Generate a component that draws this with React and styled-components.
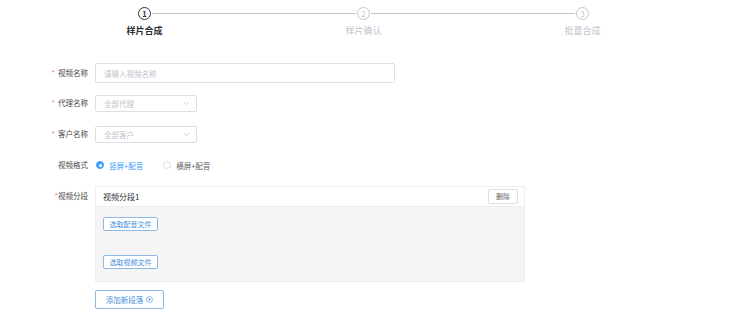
import React, { useState } from 'react';
import styled, { createGlobalStyle } from 'styled-components';

const GlobalStyle = createGlobalStyle`
  body {
    margin: 0;
    background: #ffffff;
    font-family: "Noto Sans CJK SC", "Noto Sans", sans-serif;
  }
`;

const Page = styled.div`
  width: 750px;
  height: 317px;
  overflow: hidden;
`;

const Steps = styled.div`
  display: grid;
  grid-template-columns: 13px 1fr 13px 1fr 13px;
  grid-template-rows: 13px 17px;
  row-gap: 2px;
  width: 451px;
  margin-left: 138px;
  padding-top: 7px;
`;

const StepCircle = styled.div`
  width: 13px;
  height: 13px;
  box-sizing: border-box;
  border-radius: 50%;
  border: ${p => (p.$active ? '1.5px solid #303133' : '1px solid #c0c4cc')};
  color: ${p => (p.$active ? '#303133' : '#c0c4cc')};
  font-size: 7.5px;
  font-weight: ${p => (p.$active ? 700 : 400)};
  display: flex;
  align-items: center;
  justify-content: center;
  line-height: 1;
`;

const StepLine = styled.div`
  align-self: center;
  height: 1px;
  background: #c0c4cc;
  margin: 0 1px;
`;

const StepTitle = styled.div`
  grid-row: 2;
  grid-column: ${p => p.$col};
  justify-self: center;
  white-space: nowrap;
  font-size: 9px;
  line-height: 17px;
  font-weight: ${p => (p.$active ? 700 : 400)};
  color: ${p => (p.$active ? '#303133' : '#c0c4cc')};
`;

const Form = styled.div`
  margin-top: 24px;
`;

const FormItem = styled.div`
  display: flex;
  align-items: ${p => (p.$top ? 'flex-start' : 'center')};
  min-height: 20px;
  margin-bottom: ${p => p.$gap ?? 11}px;
`;

const Label = styled.div`
  width: 88px;
  padding-right: 7px;
  box-sizing: content-box;
  text-align: right;
  font-size: 7.5px;
  line-height: 20px;
  color: #48494d;
  flex-shrink: 0;
`;

const Star = styled.span`
  color: #f56c6c;
  margin-right: ${p => (p.$tight ? '0' : '3px')};
`;

const Input = styled.input`
  width: 300px;
  height: 20px;
  box-sizing: border-box;
  border: 1px solid #dcdfe6;
  border-radius: 2px;
  padding: 0 8px;
  font-family: inherit;
  font-size: 7.5px;
  color: #606266;
  outline: none;
  &::placeholder {
    color: #c0c4cc;
  }
`;

const Select = styled.div`
  width: 102px;
  height: 17px;
  box-sizing: border-box;
  border: 1px solid #dcdfe6;
  border-radius: 2px;
  padding: 0 6px 0 8px;
  display: flex;
  align-items: center;
  justify-content: space-between;
  font-size: 7.5px;
  color: #c0c4cc;
`;

const RadioGroup = styled.div`
  display: flex;
  align-items: center;
  gap: 20px;
  margin-left: 1px;
`;

const Radio = styled.label`
  display: flex;
  align-items: center;
  gap: 5px;
  font-size: 7.5px;
  color: ${p => (p.$checked ? '#409eff' : '#606266')};
  cursor: pointer;
`;

const RadioDot = styled.span`
  width: 8px;
  height: 8px;
  box-sizing: border-box;
  border-radius: 50%;
  border: 1px solid ${p => (p.$checked ? '#409eff' : '#dcdfe6')};
  background: ${p => (p.$checked ? '#409eff' : '#fff')};
  display: flex;
  align-items: center;
  justify-content: center;
  &::after {
    content: '';
    width: 3px;
    height: 3px;
    border-radius: 50%;
    background: #fff;
  }
`;

const Content = styled.div`
  display: flex;
  flex-direction: column;
  align-items: flex-start;
`;

const Segment = styled.div`
  width: 430px;
  border: 1px solid #ebeef5;
  box-sizing: border-box;
`;

const SegmentHead = styled.div`
  height: 20px;
  box-sizing: border-box;
  border-bottom: 1px solid #ebeef5;
  background: #fff;
  display: flex;
  align-items: center;
  justify-content: space-between;
  padding: 0 6px 0 7px;
  font-size: 8px;
  color: #303133;
`;

const SegmentBody = styled.div`
  background: #f5f5f5;
  height: 74px;
  box-sizing: border-box;
  padding: 10px 7px 0;
  display: flex;
  flex-direction: column;
  align-items: flex-start;
  gap: 24px;
`;

const PlainButton = styled.button`
  height: 15px;
  padding: 0 7px;
  border: 1px solid #dcdfe6;
  border-radius: 2px;
  background: #fff;
  color: #606266;
  font-family: inherit;
  font-size: 7px;
  line-height: 1;
  cursor: pointer;
`;

const PickButton = styled.button`
  width: 55px;
  height: 14px;
  padding: 0;
  border: 1px solid #8fb8e6;
  border-radius: 2px;
  background: #fff;
  color: #4a8fd9;
  font-family: inherit;
  font-size: 7px;
  line-height: 1;
  cursor: pointer;
`;

const AddButton = styled.button`
  margin-top: 8px;
  width: 69px;
  height: 19px;
  padding: 0;
  display: flex;
  align-items: center;
  justify-content: center;
  gap: 3px;
  border: 1px solid #8fb8e6;
  border-radius: 2px;
  background: #fff;
  color: #4a8fd9;
  font-family: inherit;
  font-size: 7.5px;
  cursor: pointer;
`;

const Chevron = () => (
  <svg width="7" height="5" viewBox="0 0 7 5">
    <path d="M1 1.2 L3.5 3.6 L6 1.2" fill="none" stroke="#c0c4cc" strokeWidth="0.8" />
  </svg>
);

const PlusCircle = () => (
  <svg width="7" height="7" viewBox="0 0 8 8">
    <circle cx="4" cy="4" r="3.4" fill="none" stroke="#4a8fd9" strokeWidth="0.7" />
    <path d="M4 2.4 V5.6 M2.4 4 H5.6" stroke="#4a8fd9" strokeWidth="0.7" />
  </svg>
);

const steps = ['样片合成', '样片确认', '批量合成'];

export default function App() {
  const [format, setFormat] = useState('v');

  return (
    <Page>
      <GlobalStyle />
      <Steps>
        <StepCircle $active>1</StepCircle>
        <StepLine />
        <StepCircle>2</StepCircle>
        <StepLine />
        <StepCircle>3</StepCircle>
        {steps.map((s, i) => (
          <StepTitle key={s} $col={i * 2 + 1} $active={i === 0}>{s}</StepTitle>
        ))}
      </Steps>

      <Form>
        <FormItem $gap={10}>
          <Label><Star>*</Star>视频名称</Label>
          <Input placeholder="请输入视频名称" />
        </FormItem>
        <FormItem>
          <Label><Star>*</Star>代理名称</Label>
          <Select>全部代理<Chevron /></Select>
        </FormItem>
        <FormItem>
          <Label><Star>*</Star>客户名称</Label>
          <Select>全部客户<Chevron /></Select>
        </FormItem>
        <FormItem>
          <Label>视频格式</Label>
          <RadioGroup>
            <Radio $checked={format === 'v'} onClick={() => setFormat('v')}>
              <RadioDot $checked={format === 'v'} />竖屏+配音
            </Radio>
            <Radio $checked={format === 'h'} onClick={() => setFormat('h')}>
              <RadioDot $checked={format === 'h'} />横屏+配音
            </Radio>
          </RadioGroup>
        </FormItem>
        <FormItem $top>
          <Label><Star $tight>*</Star>视频分段</Label>
          <Content>
            <Segment>
              <SegmentHead>
                视频分段1
                <PlainButton>删除</PlainButton>
              </SegmentHead>
              <SegmentBody>
                <PickButton>选取配音文件</PickButton>
                <PickButton>选取视频文件</PickButton>
              </SegmentBody>
            </Segment>
            <AddButton>添加新段落 <PlusCircle /></AddButton>
          </Content>
        </FormItem>
      </Form>
    </Page>
  );
}
